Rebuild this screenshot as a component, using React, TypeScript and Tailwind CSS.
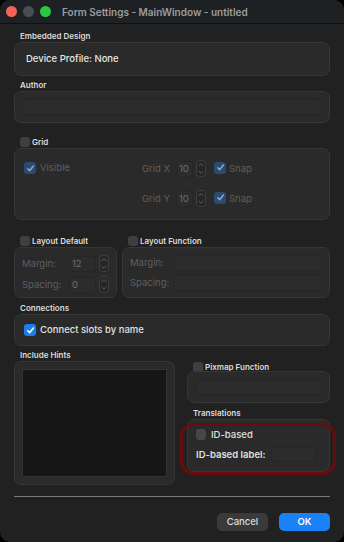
import React from 'react';

const font = { fontFamily: 'Inter, "Noto Sans", "Liberation Sans", sans-serif' };

const Check = ({ on = false, dim = false }: { on?: boolean; dim?: boolean }) => {
  if (!on) return <span className="inline-block w-[10px] h-[10px] rounded-[3px] bg-[#3f3f3f] shrink-0" />;
  return (
    <span
      className={`inline-flex items-center justify-center w-[12px] h-[12px] rounded-[3px] shrink-0 ${
        dim ? 'bg-[#2b4a73]' : 'bg-[#1c7cf2]'
      }`}
    >
      <svg width="9" height="9" viewBox="0 0 10 10" fill="none">
        <path d="M2 5.3l2 2.2L8.2 2.3" stroke={dim ? '#8ea5c2' : '#ffffff'} strokeWidth="1.8" strokeLinecap="round" strokeLinejoin="round" />
      </svg>
    </span>
  );
};

const Field = ({ className = '', children }: { className?: string; children?: React.ReactNode }) => (
  <div className={`bg-[#2c2c2c] rounded-[3px] border border-[#262626] flex items-center whitespace-nowrap ${className}`}>{children}</div>
);

const Spin = ({ value, w }: { value: string; w: string }) => (
  <div className="flex items-center gap-[3px] shrink-0">
    <Field className={`${w} h-[16px] px-[2px] text-[9.5px] leading-[12px] text-[#6e6e6e]`}>{value}</Field>
    <svg width="10" height="17" viewBox="0 0 10 17" fill="none">
      <rect x="0.5" y="0.5" width="9" height="16" rx="3" stroke="#3e3e3e" fill="#262626" />
      <path d="M2.6 6l2.4-2.4L7.4 6M2.6 11l2.4 2.4L7.4 11" stroke="#5c5c5c" strokeWidth="1" fill="none" />
    </svg>
  </div>
);

const Box = ({ className = '', children }: { className?: string; children?: React.ReactNode }) => (
  <div className={`bg-[#2a2a2a] border border-[#363636] rounded-[7px] ${className}`}>{children}</div>
);

const Label = ({ children, className = '' }: { children: React.ReactNode; className?: string }) => (
  <div className={`text-[8px] font-semibold text-[#dcdcdc] leading-[12px] whitespace-nowrap ${className}`}>{children}</div>
);

export default function App() {
  return (
    <div className="w-[344px] h-[542px] bg-black" style={font}>
      <div className="w-full h-full rounded-[10px] overflow-hidden bg-[#212121] flex flex-col">
        {/* title bar */}
        <div className="h-[24px] bg-[#1e2124] border-b border-[#111] flex items-center pl-[6px] shrink-0">
          <span className="w-[11px] h-[11px] rounded-full bg-[#fe5f57]" />
          <span className="w-[11px] h-[11px] rounded-full bg-[#4b4d50] ml-[6px]" />
          <span className="w-[11px] h-[11px] rounded-full bg-[#28c840] ml-[6px]" />
          <span className="ml-[11px] text-[10px] leading-[14px] font-semibold text-[#9b9c9e] whitespace-nowrap">
            Form Settings - MainWindow - untitled
          </span>
        </div>

        <div className="px-[14px] flex flex-col">
          <Label className="mt-[6px] ml-[6px]">Embedded Design</Label>
          <Box className="h-[34px] flex items-center pl-[11px]">
            <span className="text-[9.5px] leading-[12px] font-medium text-[#e6e6e6]">Device Profile: None</span>
          </Box>

          <Label className="mt-[3px] ml-[6px]">Author</Label>
          <Box className="h-[32px] px-[7px] flex items-center">
            <Field className="w-full h-[16px]" />
          </Box>

          <div className="mt-[13px] ml-[6px] flex items-center gap-[2px] h-[12px]">
            <Check />
            <Label>Grid</Label>
          </div>
          <Box className="h-[72px] relative text-[9.5px] leading-[12px] text-[#5f5f5f] whitespace-nowrap">
            <div className="absolute left-[9px] top-[13px] flex items-center gap-[4px]">
              <Check on dim />
              <span>Visible</span>
            </div>
            <div className="absolute left-[127px] top-[11px] flex items-center">
              <span className="w-[34px]">Grid X</span>
              <Spin value="10" w="w-[17px]" />
              <span className="ml-[8px]"><Check on dim /></span>
              <span className="ml-[3px]">Snap</span>
            </div>
            <div className="absolute left-[127px] top-[41px] flex items-center">
              <span className="w-[34px]">Grid Y</span>
              <Spin value="10" w="w-[17px]" />
              <span className="ml-[8px]"><Check on dim /></span>
              <span className="ml-[3px]">Snap</span>
            </div>
          </Box>

          <div className="mt-[15px] flex gap-[5px]">
            <div className="w-[103px] flex flex-col">
              <div className="ml-[6px] flex items-center gap-[2px] h-[12px]">
                <Check />
                <Label>Layout Default</Label>
              </div>
              <Box className="h-[51px] px-[7px] pt-[7px] flex flex-col gap-[4px] text-[9.5px] leading-[12px] text-[#5f5f5f] whitespace-nowrap">
                <div className="flex items-center">
                  <span className="w-[47px]">Margin:</span>
                  <Spin value="12" w="w-[27px]" />
                </div>
                <div className="flex items-center">
                  <span className="w-[47px]">Spacing:</span>
                  <Spin value="0" w="w-[27px]" />
                </div>
              </Box>
            </div>
            <div className="flex-1 flex flex-col">
              <div className="ml-[6px] flex items-center gap-[2px] h-[12px]">
                <Check />
                <Label>Layout Function</Label>
              </div>
              <Box className="h-[51px] px-[7px] pt-[7px] flex flex-col gap-[4px] text-[9.5px] leading-[12px] text-[#5f5f5f] whitespace-nowrap">
                <div className="flex items-center">
                  <span className="w-[44px]">Margin:</span>
                  <Field className="flex-1 h-[16px]" />
                </div>
                <div className="flex items-center">
                  <span className="w-[44px]">Spacing:</span>
                  <Field className="flex-1 h-[16px]" />
                </div>
              </Box>
            </div>
          </div>

          <Label className="mt-[4px] ml-[6px]">Connections</Label>
          <Box className="h-[32px] flex items-center pl-[9px] gap-[4px]">
            <Check on />
            <span className="text-[9.5px] leading-[12px] font-medium text-[#e0e0e0] whitespace-nowrap">Connect slots by name</span>
          </Box>

          <div className="flex gap-[12px] mt-[3px]">
            <div className="w-[161px] flex flex-col">
              <Label className="ml-[6px]">Include Hints</Label>
              <Box className="h-[124px] p-[7px]">
                <div className="w-full h-full bg-[#161616] border border-[#333]" />
              </Box>
            </div>
            <div className="flex-1 flex flex-col">
              <div className="mt-[12px] ml-[6px] flex items-center gap-[2px] h-[12px]">
                <Check />
                <Label>Pixmap Function</Label>
              </div>
              <Box className="mt-[-2px] h-[32px] px-[7px] flex items-center">
                <Field className="w-full h-[15px]" />
              </Box>
              <Label className="mt-[4px] ml-[6px]">Translations</Label>
              <div className="relative">
                <Box className="h-[53px] pl-[8px] pt-[8px] flex flex-col gap-[6px]">
                  <div className="flex items-center gap-[5px] h-[13px]">
                    <span className="inline-block w-[10px] h-[11px] rounded-[3px] bg-[#474747]" />
                    <span className="text-[9.5px] leading-[12px] font-medium text-[#e0e0e0] whitespace-nowrap">ID-based</span>
                  </div>
                  <div className="flex items-center">
                    <span className="text-[9.5px] leading-[12px] font-semibold text-[#e0e0e0] whitespace-nowrap">ID-based label:</span>
                    <Field className="ml-[5px] w-[45px] h-[15px]" />
                  </div>
                </Box>
                <div className="absolute left-[-7px] right-[-6px] top-[4px] h-[52px] rounded-[14px] border-[3px] border-[#6a0c0c]" />
              </div>
            </div>
          </div>

          <div className="mt-[11px] h-[1px] bg-[#7a7a7a]" />

          <div className="mt-[16px] flex justify-end gap-[11px]">
            <button className="w-[51px] h-[18px] rounded-[5px] bg-[#3a3a3a] text-[9.5px] leading-[12px] font-medium text-[#dedede] flex items-center justify-center">
              Cancel
            </button>
            <button className="w-[51px] h-[18px] rounded-[5px] bg-[#1b81f7] text-[9.5px] leading-[12px] font-semibold text-white flex items-center justify-center">
              OK
            </button>
          </div>
        </div>
      </div>
    </div>
  );
}
